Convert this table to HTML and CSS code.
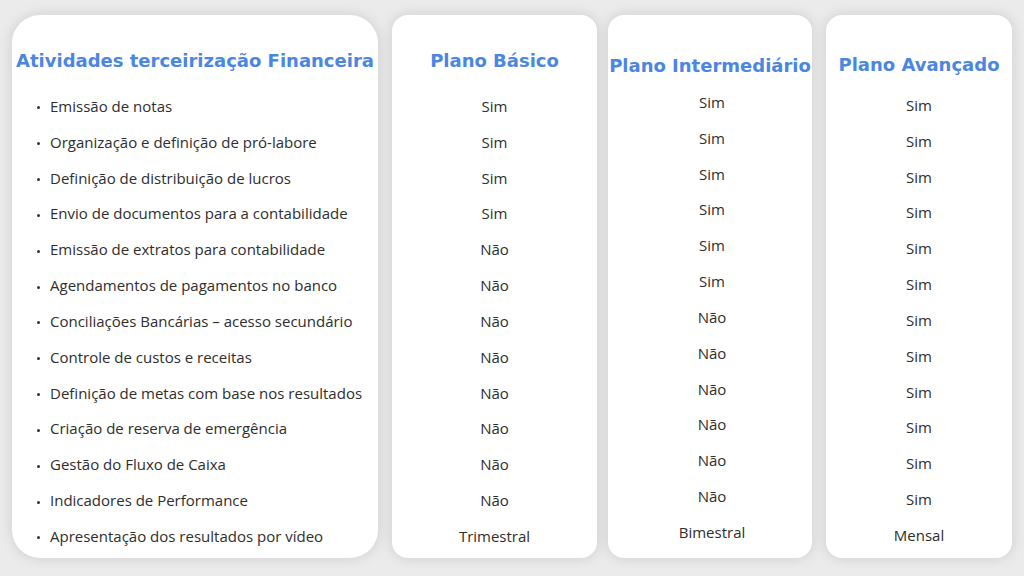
FILE: index.html
```html
<!DOCTYPE html>
<html lang="pt-BR">
<head>
<meta charset="utf-8">
<title>Planos</title>
<link rel="stylesheet" href="styles.css">
</head>
<body>
<main class="board">
  <section class="card card-activities">
    <h2 class="card-title">Atividades terceirização Financeira</h2>
    <ul class="rows rows-bullets">
      <li>Emissão de notas</li>
      <li>Organização e definição de pró-labore</li>
      <li>Definição de distribuição de lucros</li>
      <li>Envio de documentos para a contabilidade</li>
      <li>Emissão de extratos para contabilidade</li>
      <li>Agendamentos de pagamentos no banco</li>
      <li>Conciliações Bancárias – acesso secundário</li>
      <li>Controle de custos e receitas</li>
      <li>Definição de metas com base nos resultados</li>
      <li>Criação de reserva de emergência</li>
      <li>Gestão do Fluxo de Caixa</li>
      <li>Indicadores de Performance</li>
      <li>Apresentação dos resultados por vídeo</li>
    </ul>
  </section>
  <section class="card card-basic">
    <h2 class="card-title">Plano Básico</h2>
    <ul class="rows rows-center">
      <li>Sim</li><li>Sim</li><li>Sim</li><li>Sim</li>
      <li>Não</li><li>Não</li><li>Não</li><li>Não</li>
      <li>Não</li><li>Não</li><li>Não</li><li>Não</li>
      <li>Trimestral</li>
    </ul>
  </section>
  <section class="card card-mid">
    <h2 class="card-title">Plano Intermediário</h2>
    <ul class="rows rows-center">
      <li>Sim</li><li>Sim</li><li>Sim</li><li>Sim</li>
      <li>Sim</li><li>Sim</li><li>Não</li><li>Não</li>
      <li>Não</li><li>Não</li><li>Não</li><li>Não</li>
      <li>Bimestral</li>
    </ul>
  </section>
  <section class="card card-adv">
    <h2 class="card-title">Plano Avançado</h2>
    <ul class="rows rows-center">
      <li>Sim</li><li>Sim</li><li>Sim</li><li>Sim</li>
      <li>Sim</li><li>Sim</li><li>Sim</li><li>Sim</li>
      <li>Sim</li><li>Sim</li><li>Sim</li><li>Sim</li>
      <li>Mensal</li>
    </ul>
  </section>
</main>
</body>
</html>
```

FILE: styles.css
```css
* { box-sizing: border-box; }

html, body {
  margin: 0;
  padding: 0;
}

body {
  width: 1024px;
  height: 576px;
  overflow: hidden;
  background: #ebebeb;
  font-family: "Open Sans", "Noto Sans", sans-serif;
  color: #2e2e2e;
}

.board {
  display: flex;
  align-items: flex-start;
  padding: 15px 12px 0 12px;
  gap: 14px;
}

.card {
  background: #fff;
  height: 543px;
  border-radius: 16px;
  box-shadow: 0 0 14px rgba(0, 0, 0, 0.13);
  padding-top: 31px;
}

.card-activities { width: 366px; border-radius: 28px; }
.card-basic { width: 205px; }
.card-mid { width: 204px; margin-left: -3px; padding-top: 36px; }
.card-adv { width: 186px; padding-top: 35px; }

.card-title {
  margin: 0;
  font-family: "DejaVu Sans", sans-serif;
  font-weight: 700;
  font-size: 18px;
  line-height: 30px;
  color: #4a86e2;
  text-align: center;
  white-space: nowrap;
}

.rows {
  list-style: none;
  margin: 13px 0 0 0;
  padding: 0;
  font-size: 15px;
}

.rows li {
  height: 35.83px;
  line-height: 35.83px;
  white-space: nowrap;
}

.card-mid .rows { margin-top: 4px; padding-left: 4px; }
.card-adv .rows { margin-top: 8px; }

.rows-center li { text-align: center; }

.rows-bullets { padding-left: 25px; }

.rows-bullets li::before {
  content: "";
  display: inline-block;
  width: 3px;
  height: 3px;
  margin-right: 10px;
  border-radius: 50%;
  background: #333;
  vertical-align: middle;
}
```
